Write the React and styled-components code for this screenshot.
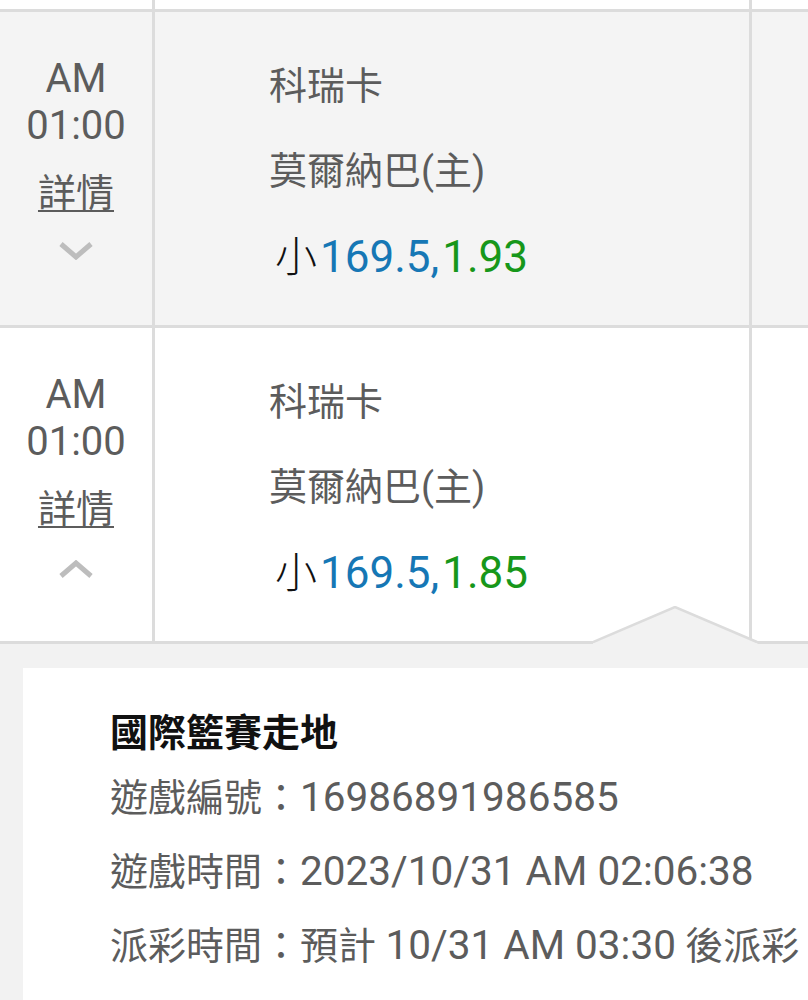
import React from "react";
import styled, { createGlobalStyle } from "styled-components";

const Global = createGlobalStyle`
  html, body { margin: 0; padding: 0; background: #ffffff; }
  body {
    font-family: Roboto, "Noto Sans CJK TC", "Noto Sans", sans-serif;
    color: #5c5c5c;
    width: 808px;
    overflow: hidden;
  }
`;

const Page = styled.div`
  width: 808px;
  height: 1000px;
  overflow: hidden;
  display: flex;
  flex-direction: column;
`;

const Row = styled.div`
  display: grid;
  grid-template-columns: 155px 597px 1fr;
  height: ${(p) => p.$h}px;
  background: ${(p) => p.$bg};
  border-bottom: 3px solid #dcdcdc;
  flex-shrink: 0;
`;

const Cell = styled.div`
  border-right: ${(p) => (p.$last ? "none" : "3px solid #dcdcdc")};
`;

const TimeCell = styled(Cell)`
  display: flex;
  flex-direction: column;
  align-items: center;
  padding-top: 43px;
  font-size: 40px;
  line-height: 47px;
  color: #5c5c5c;
`;

const DetailLink = styled.a`
  margin-top: 21px;
  font-size: 38px;
  color: #5c5c5c;
  text-decoration: underline;
  text-decoration-thickness: 2px;
  text-underline-offset: 4px;
  line-height: 47px;
`;

const Chevron = styled.svg`
  margin-top: ${(p) => (p.$up ? 27 : 24)}px;
  width: 36px;
  height: 19px;
  display: block;
`;

const MatchCell = styled(Cell)`
  display: flex;
  flex-direction: column;
  padding: 32px 0 0 114px;
  font-size: 38px;
  line-height: 85px;
  color: #5c5c5c;
`;

const Odds = styled.div`
  font-size: 44px;
  line-height: 85px;
  white-space: nowrap;
  margin-top: -3px;
`;

const OddsLabel = styled.span`
  color: #111111;
  font-family: "Noto Sans CJK TC", sans-serif;
  font-size: 42px;
  font-weight: 300;
  margin-right: 3px;
  margin-left: 6px;
`;

const OddsValue = styled.span`
  color: ${(p) => p.$c};
  margin-right: ${(p) => p.$gap || 0}px;
`;

const Panel = styled.div`
  position: relative;
  flex: 1;
  background: #f2f2f2;
  padding: 24px 0 0 23px;
`;

const Notch = styled.svg`
  position: absolute;
  left: 593px;
  top: -38px;
  width: 166px;
  height: 40px;
  display: block;
`;

const Card = styled.div`
  background: #ffffff;
  height: 100%;
  padding: 37px 0 0 87px;
  box-sizing: border-box;
  margin-right: -20px;
`;

const Title = styled.div`
  font-size: 38px;
  font-weight: 700;
  color: #111111;
  line-height: 56px;
`;

const InfoLine = styled.div`
  font-size: 38px;
  line-height: 73px;
  color: #5c5c5c;
  white-space: nowrap;
`;

const Num = styled.span`
  font-size: 40.5px;
`;

function ChevronIcon({ up }) {
  return (
    <Chevron viewBox="0 0 36 19" $up={up}>
      <polyline
        points={up ? "3,16 18,3 33,16" : "3,3 18,16 33,3"}
        fill="none"
        stroke="#bdbdbd"
        strokeWidth="5"
      />
    </Chevron>
  );
}

function MatchRow({ bg, odds, up }) {
  return (
    <Row $h={313} $bg={bg}>
      <TimeCell>
        <span>AM</span>
        <span>01:00</span>
        <DetailLink>詳情</DetailLink>
        <ChevronIcon up={up} />
      </TimeCell>
      <MatchCell>
        <span>科瑞卡</span>
        <span>莫爾納巴(主)</span>
        <Odds>
          <OddsLabel>小</OddsLabel>
          <OddsValue $c="#1677b5" $gap={3}>169.5,</OddsValue>
          <OddsValue $c="#17971a">{odds}</OddsValue>
        </Odds>
      </MatchCell>
      <Cell $last />
    </Row>
  );
}

export default function App() {
  return (
    <Page>
      <Global />
      <Row $h={9} $bg="#ffffff">
        <Cell />
        <Cell />
        <Cell $last />
      </Row>
      <MatchRow bg="#f4f4f4" odds="1.93" />
      <MatchRow bg="#ffffff" odds="1.85" up />
      <Panel>
        <Notch viewBox="0 0 166 40">
          <polygon points="0,37 82,1 164,37 166,40 0,40" fill="#f2f2f2" />
          <polyline
            points="0,36 82,1 164,36"
            fill="none"
            stroke="#dcdcdc"
            strokeWidth="2.5"
          />
        </Notch>
        <Card>
          <Title>國際籃賽走地</Title>
          <InfoLine>
            遊戲編號：<Num>16986891986585</Num>
          </InfoLine>
          <InfoLine>
            遊戲時間：<Num>2023/10/31 AM 02:06:38</Num>
          </InfoLine>
          <InfoLine>
            派彩時間：預計 <Num>10/31 AM 03:30</Num> 後派彩
          </InfoLine>
        </Card>
      </Panel>
    </Page>
  );
}
